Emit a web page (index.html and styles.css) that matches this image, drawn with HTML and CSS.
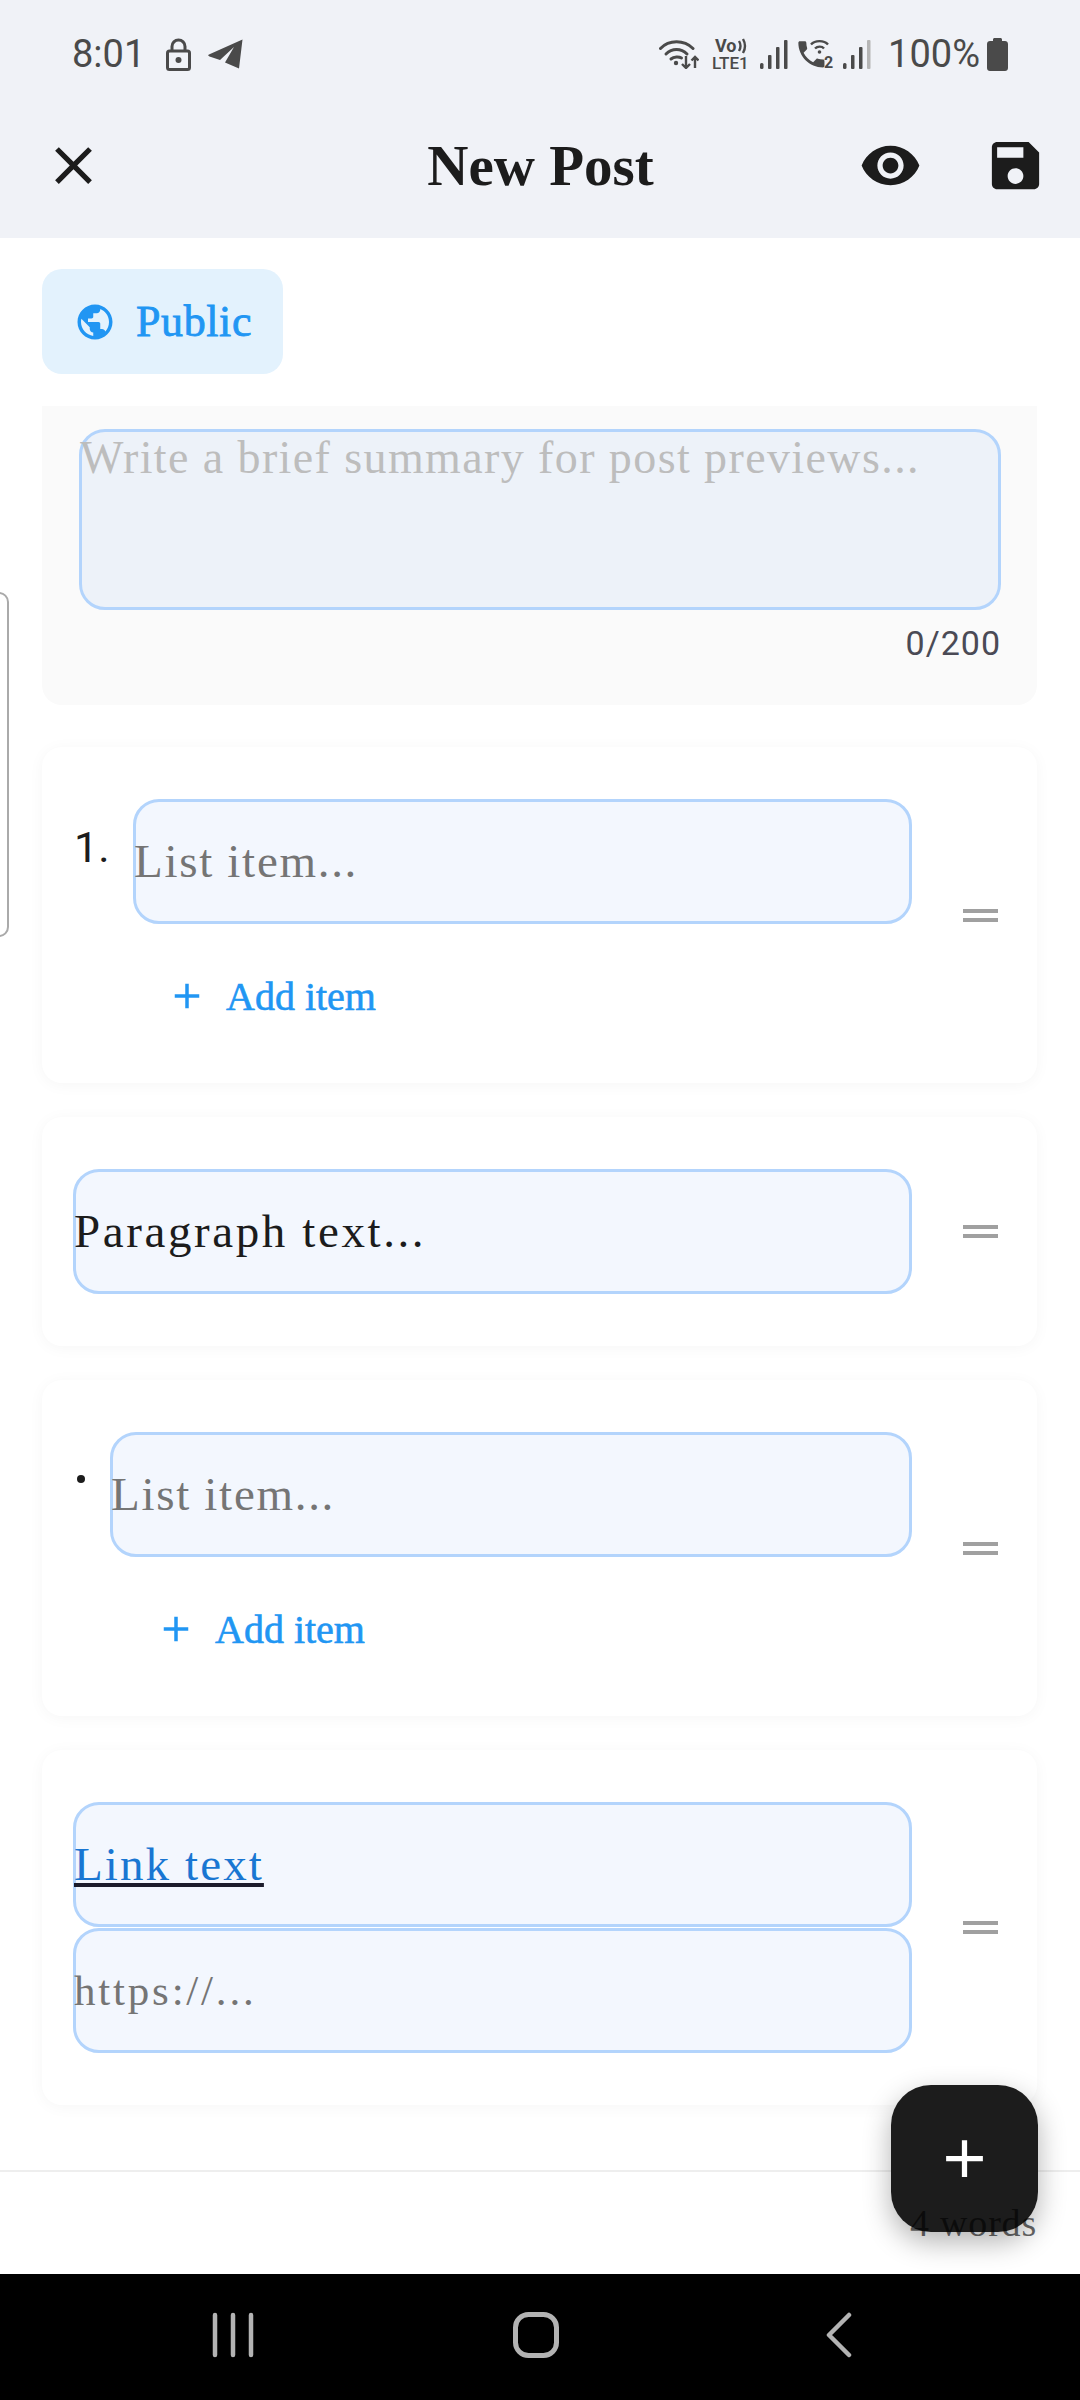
FILE: index.html
```html
<!DOCTYPE html>
<html lang="en">
<head>
    <meta charset="UTF-8">
    <meta name="viewport" content="width=device-width, initial-scale=1.0">
    <title>New Post</title>
    <link rel="stylesheet" href="styles.css">
</head>
<body>
    <div class="page">
        <header class="top">
            <div class="status">
                <div class="status-left">
                    <span class="clock">8:01</span>
                    <svg class="lock-icon" viewBox="0 0 25 33"><path d="M6 14V8.500a6.500 6.500 0 0 1 13 0V14" fill="none" stroke="#4a4a4a" stroke-width="3"/><rect x="1.500" y="13" width="22" height="18.500" rx="2" fill="none" stroke="#4a4a4a" stroke-width="3"/><circle cx="12.500" cy="22" r="3" fill="#4a4a4a"/></svg>
                    <svg class="plane-icon" viewBox="0 0 35 30"><path d="M34.500 0.500L31 29.500 17 23.500 26 8 12 21 1.500 17.500C-.5 16.500 0 16 1.500 15.200Z" fill="#4a4a4a"/></svg>
                </div>
                <div class="status-right">
                    <svg class="wifi-icon" viewBox="0 0 40 30"><g fill="none" stroke="#4a4a4a" stroke-width="3" stroke-linecap="round"><path d="M1.500 9.500C10 .5 25 .5 34 9.500"/><path d="M7 15C13 9 22 9 28 15"/><path d="M12 20C15 17.500 20 17.500 22.500 19"/></g><circle cx="17" cy="24" r="2.200" fill="#4a4a4a"/><g fill="none" stroke="#4a4a4a" stroke-width="2.400"><path d="M27 17V29M23 25l4 4 4-4"/><path d="M36 29V18M32.500 21.500L36 18l3.500 3.500"/></g></svg>
                    <svg class="volte-icon" viewBox="0 -3 39 38"><text x="3" y="14" class="volte-top">Vo</text><path d="M27 3q3 5 0 10M31 1q4 7 0 14" fill="none" stroke="#4a4a4a" stroke-width="2.400"/><text x="0" y="31" class="volte-bottom">LTE1</text></svg>
                    <svg class="bars-icon" viewBox="0 0 28 30"><rect x="0" y="24" width="3.500" height="6" rx="1.500"/><rect x="8" y="16" width="3.500" height="14" rx="1"/><rect x="16" y="8" width="3.500" height="22" rx="1"/><rect x="24" y="1" width="3.500" height="29" rx="1"/></svg>
                    <svg class="call-icon" viewBox="0 -3 37 36"><path transform="translate(-3 -2) scale(1.450)" d="M6.620 10.790c1.440 2.830 3.760 5.140 6.590 6.590l2.200-2.200c.27-.27.670-.36 1.020-.24 1.120.37 2.330.57 3.570.57.55 0 1 .45 1 1V20c0 .55-.45 1-1 1-9.390 0-17-7.610-17-17 0-.55.45-1 1-1h3.500c.55 0 1 .45 1 1 0 1.250.2 2.450.57 3.570.11.35.03.74-.25 1.020l-2.200 2.200z" fill="#4a4a4a"/><g fill="none" stroke="#4a4a4a" stroke-width="2.400"><path d="M14 5.500C18 1 27 1 31 5.500"/><path d="M18 9.500C20.500 7 25 7 27 9.500"/></g><circle cx="22.500" cy="13" r="1.800" fill="#4a4a4a"/><text x="27" y="29" class="call-sim">2</text></svg>
                    <svg class="bars-icon" viewBox="0 0 28 30"><rect x="0" y="24" width="3.500" height="6" rx="1.500"/><rect x="8" y="16" width="3.500" height="14" rx="1"/><rect x="16" y="8" width="3.500" height="22" rx="1"/><rect x="24" y="1" width="3.500" height="29" rx="1" class="bar-off"/></svg>
                    <span class="battery-text">100%</span>
                    <svg class="battery-icon" viewBox="0 0 21 33"><path d="M6 3V1.500C6 .7 6.700 0 7.500 0h6C14.300 0 15 .7 15 1.500V3h3c1.700 0 3 1.300 3 3v24c0 1.700-1.300 3-3 3H3c-1.700 0-3-1.300-3-3V6c0-1.700 1.300-3 3-3z" fill="#4a4a4a"/></svg>
                </div>
            </div>
            <div class="toolbar">
                <svg class="tool-icon" viewBox="0 0 24 24"><path d="M19 6.410L17.590 5 12 10.590 6.410 5 5 6.410 10.590 12 5 17.590 6.410 19 12 13.410 17.590 19 19 17.590 13.410 12z"/></svg>
                <h1 class="title">New Post</h1>
                <div class="tool-actions">
                    <svg class="tool-icon" viewBox="0 0 24 24"><path d="M12 4.500C7 4.500 2.730 7.610 1 12c1.730 4.390 6 7.500 11 7.500s9.270-3.110 11-7.500c-1.730-4.390-6-7.500-11-7.500zM12 17c-2.760 0-5-2.240-5-5s2.240-5 5-5 5 2.240 5 5-2.240 5-5 5zm0-8c-1.660 0-3 1.340-3 3s1.340 3 3 3 3-1.340 3-3-1.340-3-3-3z"/></svg>
                    <svg class="tool-icon" viewBox="0 0 24 24"><path d="M17 3H5c-1.110 0-2 .9-2 2v14c0 1.100.89 2 2 2h14c1.100 0 2-.9 2-2V7l-4-4zm-5 16c-1.660 0-3-1.340-3-3s1.340-3 3-3 3 1.340 3 3-1.340 3-3 3zm3-10H5V5h10v4z"/></svg>
                </div>
            </div>
        </header>

        <main class="content">
            <div class="chip">
                <svg class="chip-icon" viewBox="0 0 24 24"><path d="M12 2C6.480 2 2 6.480 2 12s4.480 10 10 10 10-4.480 10-10S17.520 2 12 2zm-1 17.930c-3.950-.49-7-3.850-7-7.930 0-.62.08-1.210.21-1.790L9 15v1c0 1.100.9 2 2 2v1.930zm6.900-2.540c-.26-.81-1-1.390-1.900-1.390h-1v-3c0-.55-.45-1-1-1H8v-2h2c.55 0 1-.45 1-1V7h2c1.100 0 2-.9 2-2v-.41c2.930 1.190 5 4.060 5 7.410 0 2.080-.8 3.970-2.100 5.390z"/></svg>
                <span>Public</span>
            </div>

            <section class="summary">
                <div class="summary-box">Write a brief summary for post previews...</div>
                <div class="counter">0/200</div>
            </section>

            <section class="card">
                <div class="card-body">
                    <div class="list-row">
                        <span class="marker number">1.</span>
                        <div class="field hint">List item...</div>
                    </div>
                    <div class="add-item add-numbered">
                        <svg class="add-icon" viewBox="0 0 24 24"><path d="M19 13h-6v6h-2v-6H5v-2h6V5h2v6h6v2z"/></svg>
                        <span>Add item</span>
                    </div>
                </div>
                <div class="handle"></div>
            </section>

            <section class="card">
                <div class="card-body">
                    <div class="field">Paragraph text...</div>
                </div>
                <div class="handle"></div>
            </section>

            <section class="card">
                <div class="card-body">
                    <div class="list-row">
                        <span class="marker bullet"></span>
                        <div class="field hint">List item...</div>
                    </div>
                    <div class="add-item add-bulleted">
                        <svg class="add-icon" viewBox="0 0 24 24"><path d="M19 13h-6v6h-2v-6H5v-2h6V5h2v6h6v2z"/></svg>
                        <span>Add item</span>
                    </div>
                </div>
                <div class="handle"></div>
            </section>

            <section class="card">
                <div class="card-body">
                    <div class="field link-field"><span class="link-text">Link text</span></div>
                    <div class="field hint url-field">https://...</div>
                </div>
                <div class="handle"></div>
            </section>
        </main>

        <footer class="word-bar"><span class="word-count">4 words</span></footer>

        <nav class="system-nav">
            <svg class="nav-icon" viewBox="0 0 46 46"><g fill="none" stroke="#b3b3b3" stroke-width="4.500" stroke-linecap="round"><path d="M5 3v40M23 3v40M41 3v40"/></g></svg>
            <svg class="nav-icon" viewBox="0 0 46 46"><rect x="2.500" y="2.500" width="41" height="41" rx="13" fill="none" stroke="#b3b3b3" stroke-width="5"/></svg>
            <svg class="nav-icon" viewBox="0 0 46 46"><path d="M33 3L13 23l20 20" fill="none" stroke="#b3b3b3" stroke-width="4.500" stroke-linecap="round" stroke-linejoin="round"/></svg>
        </nav>

        <div class="side-peek"></div>
        <button class="fab"><svg class="fab-icon" viewBox="0 0 24 24"><path d="M19 13h-6v6h-2v-6H5v-2h6V5h2v6h6v2z"/></svg></button>
    </div>
</body>
</html>
```

FILE: styles.css
```css
* {
    box-sizing: border-box;
}

body {
    margin: 0;
    background-color: #fff;
    font-family: "Liberation Serif", serif;
    color: #1c1c1c;
}

.page {
    position: relative;
    width: 1080px;
    height: 2400px;
    display: flex;
    flex-direction: column;
    overflow: hidden;
}

/* top area */
.top {
    height: 238px;
    background-color: #f0f2f7;
}

.status {
    height: 108px;
    padding: 0 72px;
    display: flex;
    align-items: center;
    justify-content: space-between;
    font-family: Roboto, sans-serif;
    font-size: 38px;
    color: #4a4a4a;
}

.status-left,
.status-right {
    display: flex;
    align-items: center;
}

.clock {
    margin-right: 21px;
}

.lock-icon {
    width: 25px;
    height: 33px;
    margin-right: 17px;
}

.plane-icon {
    width: 35px;
    height: 30px;
}

.wifi-icon {
    width: 40px;
    height: 30px;
    margin-right: 13px;
}

.volte-icon {
    width: 39px;
    height: 38px;
    margin-right: 9px;
}

.volte-top {
    font: 700 18px Roboto, sans-serif;
    fill: #4a4a4a;
}

.volte-bottom {
    font: 500 17px Roboto, sans-serif;
    fill: #4a4a4a;
}

.call-sim {
    font: 700 16px Roboto, sans-serif;
    fill: #4a4a4a;
}

.bars-icon {
    width: 28px;
    height: 30px;
    margin-right: 9px;
    fill: #4a4a4a;
}

.bars-icon .bar-off {
    fill: #b5b5b5;
}

.call-icon {
    width: 37px;
    height: 36px;
    margin-right: 9px;
}

.battery-text {
    margin-left: 8px;
    margin-right: 7px;
}

.battery-icon {
    width: 21px;
    height: 33px;
}

.toolbar {
    height: 115px;
    padding: 0 33px 0 42px;
    display: flex;
    align-items: center;
    justify-content: space-between;
}

.tool-icon {
    width: 63px;
    height: 63px;
    fill: #1c1c1c;
}

.title {
    margin: 0 0 0 117px;
    font-size: 57px;
    font-weight: 700;
}

.tool-actions {
    display: flex;
    gap: 62px;
}

/* scroll area */
.content {
    flex: 1;
    min-height: 0;
    padding: 31px 43px 0 42px;
}

.chip {
    width: 241px;
    height: 105px;
    padding-left: 32px;
    display: flex;
    align-items: center;
    gap: 20px;
    margin-bottom: 32px;
    border-radius: 20px;
    background-color: #e3f2fd;
    color: #2196f3;
    font-size: 44px;
    letter-spacing: 0.6px;
    -webkit-text-stroke: 0.8px #2196f3;
}

.chip-icon {
    width: 42px;
    height: 42px;
    fill: #2196f3;
}

.summary {
    height: 299px;
    padding: 23px 36px 0 37px;
    margin-bottom: 42px;
    border-radius: 0 0 20px 20px;
    background-color: #fafafa;
}

.summary-box {
    height: 181px;
    border: 3px solid #b3d4fc;
    border-radius: 26px;
    background-color: #edf2f9;
    font-size: 46px;
    letter-spacing: 1.4px;
    line-height: 52px;
    text-indent: -2px;
    color: #bdbdbd;
}

.counter {
    margin-top: 13px;
    text-align: right;
    font-family: Roboto, sans-serif;
    font-size: 34px;
    letter-spacing: 1px;
    color: #4a4a55;
}

.card {
    display: flex;
    align-items: center;
    padding: 52px 38px 52px 31px;
    margin-bottom: 34px;
    border-radius: 20px;
    background-color: #fff;
    box-shadow: 0 2px 16px rgba(0, 0, 0, 0.04);
}

.card-body {
    width: 839px;
    display: flex;
    flex-direction: column;
}

.handle {
    width: 35px;
    height: 13px;
    margin-left: 51px;
    border-top: 4px solid #a0a0a0;
    border-bottom: 4px solid #a0a0a0;
}

.list-row {
    display: flex;
}

.marker {
    flex: none;
}

.number {
    width: 60px;
    padding: 24px 0 0 1px;
    font-family: Roboto, sans-serif;
    font-size: 43px;
    line-height: 48px;
}

.bullet {
    width: 37px;
    position: relative;
}

.bullet::before {
    content: "";
    position: absolute;
    left: 4px;
    top: 43px;
    width: 8px;
    height: 8px;
    border-radius: 50%;
    background-color: #1c1c1c;
}

.field {
    height: 125px;
    padding-bottom: 2px;
    display: flex;
    align-items: center;
    border: 3px solid #b3d4fc;
    border-radius: 26px;
    background-color: #f3f7fe;
    font-size: 47px;
    letter-spacing: 2.6px;
    text-indent: -2px;
}

.list-row .field {
    flex: 1;
}

.hint {
    letter-spacing: 1.7px;
    color: #757575;
}

.link-field {
    letter-spacing: 2.1px;
}

.link-text {
    color: #1976d2;
    text-decoration: underline;
    text-decoration-color: #1c1c2c;
}

.url-field {
    margin-top: 1px;
    padding-bottom: 0;
    font-size: 43px;
    letter-spacing: 2.8px;
}

.add-item {
    display: flex;
    align-items: center;
    height: 42px;
    margin-top: 51px;
    margin-bottom: 14px;
    gap: 18px;
    color: #2196f3;
    font-size: 40px;
    -webkit-text-stroke: 0.6px #2196f3;
}

.add-numbered {
    margin-left: 93px;
}

.add-bulleted {
    margin-left: 82px;
}

.add-icon {
    width: 42px;
    height: 42px;
    fill: #2196f3;
}

/* bottom */
.word-bar {
    height: 104px;
    padding-right: 43px;
    display: flex;
    align-items: center;
    justify-content: flex-end;
    border-top: 2px solid #eee;
}

.word-count {
    position: relative;
    z-index: 2;
    font-size: 38px;
    letter-spacing: 0.8px;
    color: rgba(0, 0, 0, 0.6);
}

.system-nav {
    height: 126px;
    padding: 0 8px 5px 0;
    display: flex;
    align-items: center;
    justify-content: center;
    gap: 257px;
    background-color: #000;
}

.nav-icon {
    width: 46px;
    height: 46px;
}

.side-peek {
    position: absolute;
    left: -20px;
    top: 592px;
    width: 29px;
    height: 345px;
    border: 2px solid #aaa;
    border-radius: 10px;
}

.fab {
    position: absolute;
    left: 891px;
    top: 2085px;
    width: 147px;
    height: 147px;
    padding: 0;
    display: flex;
    align-items: center;
    justify-content: center;
    border: 0;
    border-radius: 40px;
    background-color: #1c1c1c;
    box-shadow: 0 10px 28px rgba(0, 0, 0, 0.3);
}

.fab-icon {
    width: 63px;
    height: 63px;
    fill: #fff;
}
```
